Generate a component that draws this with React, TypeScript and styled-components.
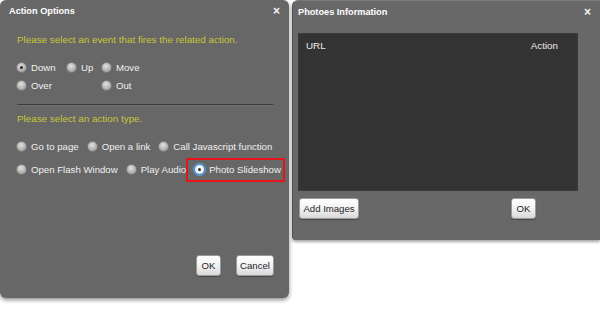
import styled, { createGlobalStyle } from "styled-components";

const GlobalStyle = createGlobalStyle`
  html, body {
    margin: 0;
    padding: 0;
    background: #ffffff;
  }
  body {
    font-family: "Liberation Sans", Arial, sans-serif;
    font-size: 10px;
  }
`;

const Page = styled.div`
  width: 600px;
  height: 309px;
  display: flex;
  align-items: flex-start;
  overflow: hidden;
  background: #fff;
`;

const LeftDialog = styled.div`
  width: 289px;
  height: 298px;
  flex-shrink: 0;
  display: flex;
  flex-direction: column;
  background: #676767;
  border-radius: 6px;
  box-shadow: 0 2px 4px rgba(0, 0, 0, 0.45);
`;

const RightDialog = styled.div`
  flex: 1;
  height: 240px;
  margin-left: 3px;
  display: flex;
  flex-direction: column;
  background: #686868;
  border-left: 1px solid #505050;
  border-top: 1px solid #7a7a7a;
  border-radius: 6px 0 0 4px;
  box-shadow: 0 2px 3px rgba(0, 0, 0, 0.35);
  box-sizing: border-box;
`;

const TitleBar = styled.div<{ $left: number; $right: number }>`
  height: 22px;
  flex-shrink: 0;
  display: flex;
  align-items: center;
  justify-content: space-between;
  padding: 0 ${(p) => p.$right}px 0 ${(p) => p.$left}px;
  color: #fff;
  font-weight: bold;
  font-size: 9.2px;
`;

const Close = styled.span`
  font-size: 12px;
  font-weight: bold;
  line-height: 1;
  color: #f4f4f4;
`;

const Body = styled.div`
  padding: 0 16px 0 17px;
  display: flex;
  flex-direction: column;
`;

const Prompt = styled.div<{ $top: number }>`
  margin-top: ${(p) => p.$top}px;
  height: 14px;
  line-height: 14px;
  color: #c6c638;
  font-size: 9.85px;
`;

const EventGrid = styled.div`
  margin-top: 11px;
  display: grid;
  grid-template-columns: 50px 35px auto;
  grid-auto-rows: 18px;
`;

const ActionRow = styled.div<{ $top: number }>`
  margin-top: ${(p) => p.$top}px;
  height: 18px;
  display: flex;
  align-items: center;
  gap: 9px;
`;

const Option = styled.label<{ $col?: number; $boxed?: boolean }>`
  position: relative;
  display: flex;
  align-items: center;
  gap: 4px;
  color: #f0f0f0;
  font-size: 9.65px;
  white-space: nowrap;
  margin-left: -1px;
  ${(p) => (p.$col ? `grid-column: ${p.$col};` : "")}
  ${(p) =>
    p.$boxed
      ? `
    &::after {
      content: "";
      position: absolute;
      top: -6px;
      bottom: -7px;
      left: -8px;
      right: -4px;
      border: 2px solid #e3141a;
    }
  `
      : ""}
`;

const Radio = styled.span<{ $checked?: boolean; $focus?: boolean }>`
  width: 11px;
  height: 11px;
  border-radius: 50%;
  box-sizing: border-box;
  flex-shrink: 0;
  display: flex;
  align-items: center;
  justify-content: center;
  border: 1px solid ${(p) => (p.$focus ? "#3d8fd6" : "#7d7d7d")};
  background: ${(p) =>
    p.$focus
      ? "radial-gradient(circle at 50% 40%, #ffffff 0%, #e8eef4 70%)"
      : "radial-gradient(circle at 45% 35%, #e2e2e2 0%, #b4b4b4 55%, #929292 100%)"};
  ${(p) => (p.$focus ? "box-shadow: 0 0 0 1px #5aa4e4;" : "")}

  &::before {
    content: "";
    display: ${(p) => (p.$checked ? "block" : "none")};
    width: 3px;
    height: 3px;
    border-radius: 50%;
    background: #2a2a2a;
  }
`;

const Divider = styled.div`
  margin-top: 10px;
  height: 1px;
  background: #3c3c3c;
  border-bottom: 1px solid #727272;
`;

const Footer = styled.div<{ $justify: string; $padding: string }>`
  display: flex;
  justify-content: ${(p) => p.$justify};
  gap: 15px;
  padding: ${(p) => p.$padding};
`;

const Button = styled.button<{ $width: number }>`
  width: ${(p) => p.$width}px;
  height: 21px;
  padding: 0;
  border: 1px solid #9a9a9a;
  border-radius: 3px;
  background: linear-gradient(180deg, #ffffff 0%, #f2f2f2 50%, #d9d9d9 100%);
  color: #1e1e1e;
  font-family: "Liberation Sans", Arial, sans-serif;
  font-size: 9.6px;
  box-shadow: 0 1px 1px rgba(0, 0, 0, 0.3);
`;

const Spacer = styled.div`
  flex: 1;
`;

const TablePanel = styled.div`
  margin: 10px 22px 0 5px;
  height: 156px;
  background: #333333;
  border: 1px solid #3b3b3b;
  display: flex;
  flex-direction: column;
`;

const TableHead = styled.div`
  display: flex;
  justify-content: space-between;
  padding: 6px 19px 0 7px;
  color: #eaeaea;
  font-size: 9.8px;
`;

const events = [
  { label: "Down", col: 1, checked: true },
  { label: "Up", col: 2 },
  { label: "Move", col: 3 },
  { label: "Over", col: 1 },
  { label: "Out", col: 3 },
];

const actionRows = [
  [{ label: "Go to page" }, { label: "Open a link" }, { label: "Call Javascript function" }],
  [
    { label: "Open Flash Window" },
    { label: "Play Audio" },
    { label: "Photo Slideshow", checked: true },
  ],
];

export default function App() {
  return (
    <>
      <GlobalStyle />
      <Page>
        <LeftDialog>
          <TitleBar $left={9} $right={9}>
            <span>Action Options</span>
            <Close>×</Close>
          </TitleBar>
          <Body>
            <Prompt $top={11}>Please select an event that fires the related action.</Prompt>
            <EventGrid>
              {events.map((e) => (
                <Option key={e.label} $col={e.col}>
                  <Radio $checked={e.checked} />
                  {e.label}
                </Option>
              ))}
            </EventGrid>
            <Divider />
            <Prompt $top={6}>Please select an action type.</Prompt>
            {actionRows.map((row, i) => (
              <ActionRow key={i} $top={i === 0 ? 11 : 5}>
                {row.map((a: { label: string; checked?: boolean }) => (
                  <Option key={a.label} $boxed={a.checked}>
                    <Radio $checked={a.checked} $focus={a.checked} />
                    {a.label}
                  </Option>
                ))}
              </ActionRow>
            ))}
          </Body>
          <Spacer />
          <Footer $justify="flex-end" $padding="0 15px 22px 0">
            <Button $width={25}>OK</Button>
            <Button $width={38}>Cancel</Button>
          </Footer>
        </LeftDialog>

        <RightDialog>
          <TitleBar $left={5} $right={9}>
            <span>Photoes Information</span>
            <Close>×</Close>
          </TitleBar>
          <TablePanel>
            <TableHead>
              <span>URL</span>
              <span>Action</span>
            </TableHead>
          </TablePanel>
          <Footer $justify="space-between" $padding="7px 64px 0 6px">
            <Button $width={60}>Add Images</Button>
            <Button $width={25}>OK</Button>
          </Footer>
        </RightDialog>
      </Page>
    </>
  );
}
